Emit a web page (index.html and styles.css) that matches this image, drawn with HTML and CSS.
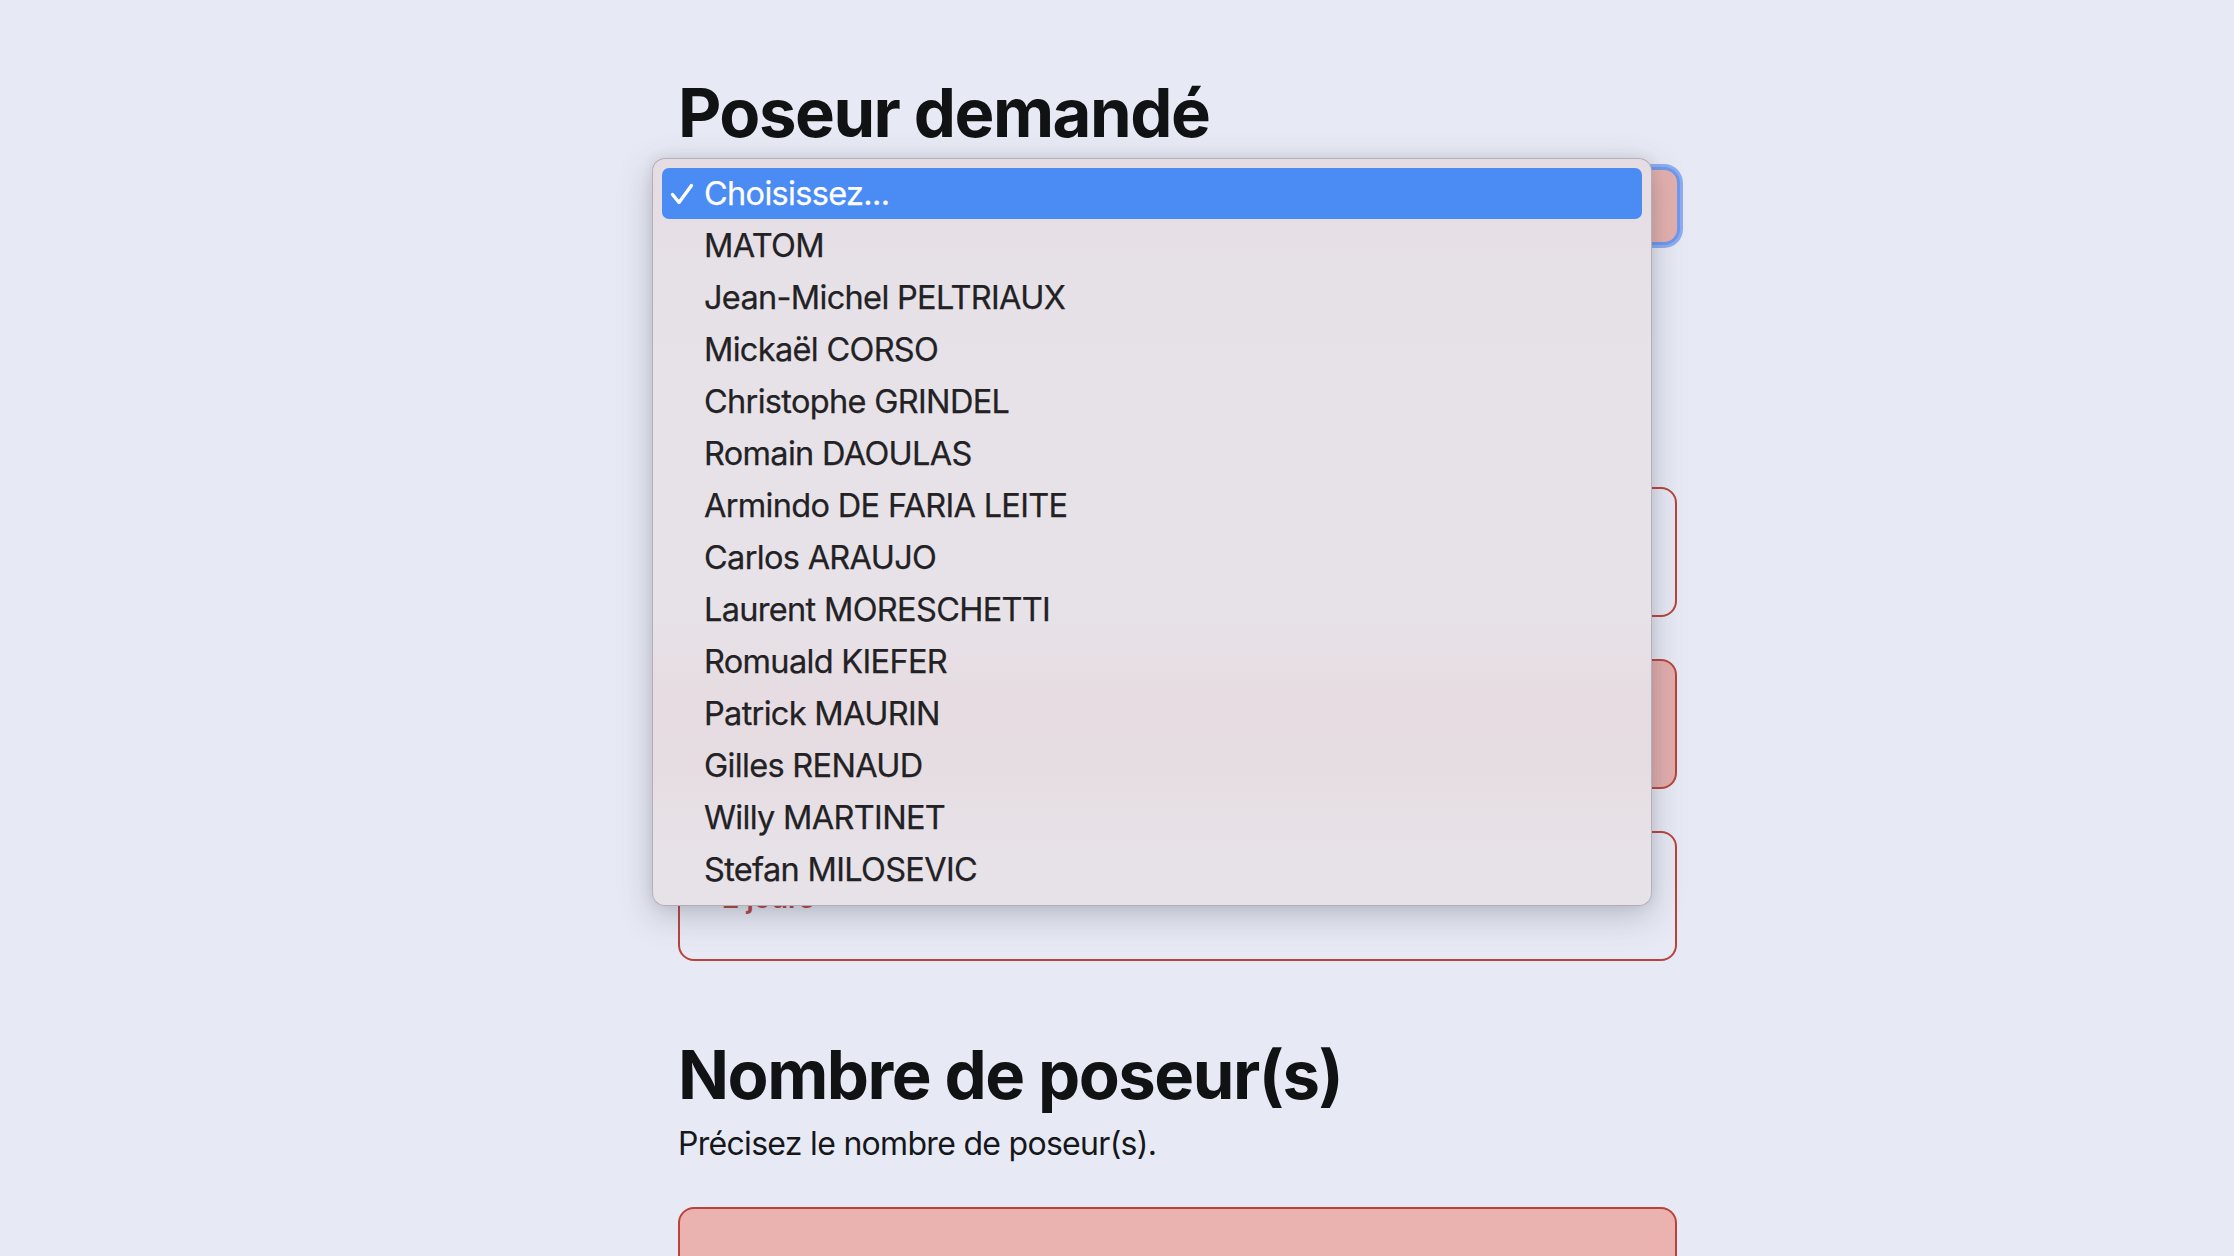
FILE: index.html
```html
<!DOCTYPE html>
<html lang="fr">
<head>
<meta charset="utf-8">
<title>Poseur demandé</title>
<link rel="stylesheet" href="styles.css">
</head>
<body>
<main class="form">
  <section class="field">
    <h1 class="title">Poseur demandé</h1>
    <div class="select-wrap">
      <div class="select"></div>
      <div class="menu">
        <div class="opt opt-active">
          <svg class="check" width="24" height="22" viewBox="0 0 24 22"><path d="M2.5 11.5 L9 19.5 L21.5 2.5" fill="none" stroke="#fff" stroke-width="3.4" stroke-linecap="round" stroke-linejoin="round"/></svg>
          <span>Choisissez...</span>
        </div>
        <div class="opt"><span>MATOM</span></div>
        <div class="opt"><span>Jean-Michel PELTRIAUX</span></div>
        <div class="opt"><span>Mickaël CORSO</span></div>
        <div class="opt"><span>Christophe GRINDEL</span></div>
        <div class="opt"><span>Romain DAOULAS</span></div>
        <div class="opt"><span>Armindo DE FARIA LEITE</span></div>
        <div class="opt"><span>Carlos ARAUJO</span></div>
        <div class="opt"><span>Laurent MORESCHETTI</span></div>
        <div class="opt"><span>Romuald KIEFER</span></div>
        <div class="opt"><span>Patrick MAURIN</span></div>
        <div class="opt"><span>Gilles RENAUD</span></div>
        <div class="opt"><span>Willy MARTINET</span></div>
        <div class="opt"><span>Stefan MILOSEVIC</span></div>
      </div>
    </div>
  </section>

  <section class="field field-duree">
    <div class="choices">
      <div class="choice"></div>
      <div class="choice choice-pink"></div>
      <div class="choice"><span class="choice-value">2 jours</span></div>
    </div>
  </section>

  <section class="field field-nombre">
    <h2 class="title">Nombre de poseur(s)</h2>
    <p class="desc">Précisez le nombre de poseur(s).</p>
    <div class="input-box"></div>
  </section>
</main>
</body>
</html>
```

FILE: styles.css
```css
html, body {
  margin: 0;
  padding: 0;
}

body {
  background: #e7eaf4;
  font-family: Inter, "Noto Sans", "Liberation Sans", sans-serif;
  color: #111214;
  overflow: hidden;
  height: 1256px;
}

.form {
  width: 999px;
  padding: 73px 0 0 678px;
}

.title {
  margin: 0;
  font-size: 67px;
  line-height: 80px;
  font-weight: 700;
  letter-spacing: -1.5px;
  color: #111214;
  white-space: nowrap;
}

.desc {
  margin: 8px 0 0 0;
  font-size: 32px;
  line-height: 42px;
  font-weight: 400;
  letter-spacing: -0.7px;
  color: #16171a;
}

.select-wrap {
  position: relative;
  margin-top: 17px;
}

.select {
  height: 72px;
  border-radius: 13px;
  background: #e4b0ae;
  box-shadow: 0 0 0 3px #6f98ee, 0 0 0 6px rgba(111, 152, 238, 0.75);
}

.menu {
  position: absolute;
  z-index: 10;
  left: -26px;
  top: -12px;
  width: 980px;
  padding: 9px;
  border: 1px solid rgba(120, 115, 125, 0.45);
  border-radius: 13px;
  background: linear-gradient(to bottom,
    #e6dce3 0%, #e6e0e7 14%, #e7e2e8 30%, #e7e2e8 62%,
    #e6dce1 72%, #e6dde2 82%, #e7e2e8 92%, #e7e2e8 100%);
  box-shadow: 0 10px 34px rgba(70, 72, 92, 0.28), 0 0 12px rgba(70, 72, 92, 0.12);
  font-size: 32.5px;
  letter-spacing: -0.68px;
  color: #222124;
  -webkit-text-stroke: 0.25px #222124;
}

.opt {
  display: flex;
  align-items: flex-start;
  height: 52px;
  line-height: 48px;
  padding: 2px 0 0 42px;
  box-sizing: border-box;
  border-radius: 7px;
  position: relative;
  white-space: nowrap;
}

.opt-active {
  height: 51px;
  margin-bottom: 1px;
  background: #4a8bf4;
  color: #ffffff;
  -webkit-text-stroke: 0.25px #ffffff;
}

.check {
  position: absolute;
  left: 8px;
  top: 15px;
}

.field-duree {
  padding-top: 245px;
}

.choices {
  display: flex;
  flex-direction: column;
  gap: 42px;
}

.choice {
  height: 130px;
  box-sizing: border-box;
  border: 2px solid #b9433b;
  border-radius: 16px;
  padding: 47px 40px 0 42px;
  display: flex;
  flex-direction: column;
  color: #b9433b;
}

.choice-pink {
  background: #e3aeac;
}

.choice-value {
  font-size: 28px;
  line-height: 36px;
  font-weight: 600;
}

.field-nombre .title {
  margin-top: 74px;
}

.input-box {
  margin-top: 42px;
  height: 120px;
  box-sizing: border-box;
  border: 2px solid #b9433b;
  border-radius: 16px;
  background: #ebb3b0;
}
```
